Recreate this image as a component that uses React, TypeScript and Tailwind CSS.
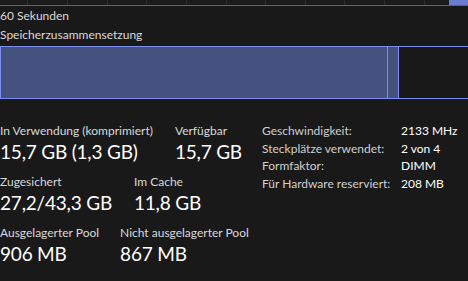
import React from 'react';

const gridLines = [27, 67, 107, 146, 186, 226, 265, 305, 344, 384, 424];

function Stat({ label, value }: { label: string; value: string }) {
  return (
    <div className="flex flex-col whitespace-nowrap">
      <span className="text-[12px] leading-[16px] text-[#d9d9d9]">{label}</span>
      <span className="text-[19px] leading-[26px] tracking-[-0.2px] text-white">{value}</span>
    </div>
  );
}

const hwRows = [
  ['Geschwindigkeit:', '2133 MHz'],
  ['Steckplätze verwendet:', '2 von 4'],
  ['Formfaktor:', 'DIMM'],
  ['Für Hardware reserviert:', '208 MB'],
];

export default function App() {
  return (
    <div
      className="w-[468px] h-[281px] overflow-hidden bg-[#191919] text-[#d9d9d9]"
      style={{ fontFamily: 'Lato, "Noto Sans", sans-serif' }}
    >
      {/* Verlauf (Graph-Rest) */}
      <div className="relative h-[6px] border-b border-[#5b6288] bg-[#1b1b1b]">
        {gridLines.map((x) => (
          <div key={x} className="absolute top-0 bottom-0 w-px bg-[#2c2c2c]" style={{ left: x }} />
        ))}
        <div className="absolute top-0 bottom-0 left-[449px] right-0 bg-[#6a7bd0]" />
      </div>

      <div className="pt-[2px] text-[12px] leading-[16px]">60 Sekunden</div>
      <div className="mt-[3px] text-[12px] leading-[16px]">Speicherzusammensetzung</div>

      {/* Zusammensetzung */}
      <div className="mt-[3px] flex h-[53px] w-[480px] border border-[#7b8ff0]">
        <div className="w-[386px] bg-[#44507e]" />
        <div className="w-[12px] border-x border-[#7b8ff0] bg-[#44507e]" />
        <div className="flex-1" />
      </div>

      <div className="mt-[24px] flex">
        <div className="flex w-[262px] flex-col gap-[9px]">
          <div className="flex gap-[22px]">
            <Stat label="In Verwendung (komprimiert)" value="15,7 GB (1,3 GB)" />
            <Stat label="Verfügbar" value="15,7 GB" />
          </div>
          <div className="flex gap-[22px]">
            <Stat label="Zugesichert" value="27,2/43,3 GB" />
            <Stat label="Im Cache" value="11,8 GB" />
          </div>
          <div className="flex gap-[21px]">
            <Stat label="Ausgelagerter Pool" value="906 MB" />
            <Stat label="Nicht ausgelagerter Pool" value="867 MB" />
          </div>
        </div>
        <div className="mt-[-1px] flex flex-col whitespace-nowrap text-[12px] leading-[17.7px]">
          {hwRows.map(([k, v]) => (
            <div key={k} className="flex">
              <span className="w-[139px] text-[#d0d0d0]">{k}</span>
              <span className="text-white">{v}</span>
            </div>
          ))}
        </div>
      </div>
    </div>
  );
}
